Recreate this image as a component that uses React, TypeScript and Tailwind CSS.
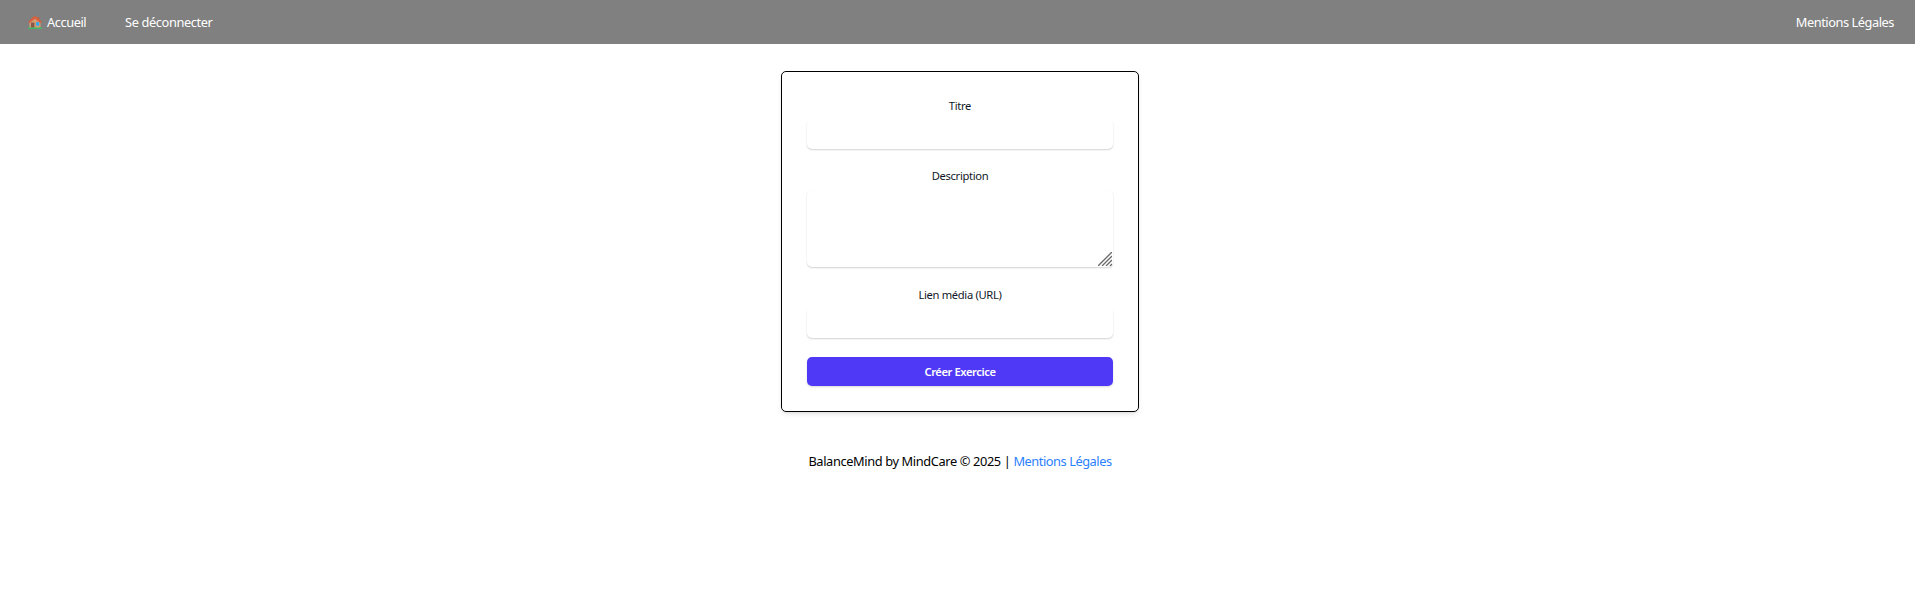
import type { ReactNode } from "react";

function HouseIcon() {
  return (
    <svg width="14" height="13" viewBox="0 0 14 13" aria-hidden="true" className="mb-[2px] shrink-0">
      <rect x="9.6" y="1" width="1.8" height="4" fill="#a8654d" />
      <path d="M1.5 6 7 1.8 12.5 6v6h-11z" fill="#d59b73" />
      <path d="M.3 5.8 5.5.5h3l5.2 5.3-1 1.4L7 2.8 1.3 7.2z" fill="#d9603f" />
      <rect x="3" y="6.6" width="3.4" height="5.2" fill="#85594a" />
      <rect x="8" y="6.2" width="3.2" height="3.4" fill="#2ea8ee" />
      <rect x="0" y="11.6" width="14" height="1.3" rx=".5" fill="#3fb966" />
    </svg>
  );
}

function ResizeGrip() {
  return (
    <svg
      width="14"
      height="14"
      viewBox="0 0 14 14"
      stroke="#6b6b6b"
      strokeWidth="1.4"
      aria-hidden="true"
      className="pointer-events-none absolute right-[1px] bottom-[1px]"
    >
      <path d="M0 14 14 0M4 14 14 4M8 14l6-6M12 14l2-2" />
    </svg>
  );
}

function Field({ label, id, children }: { label: string; id: string; children: ReactNode }) {
  return (
    <div className="flex flex-col">
      <label
        htmlFor={id}
        className="mb-[6px] h-4 text-center text-[11.2px] leading-4 tracking-[-0.32px] text-[#101828]"
      >
        {label}
      </label>
      {children}
    </div>
  );
}

const inputClass =
  "block w-full rounded-[5px] bg-white px-2.5 text-[11.2px] shadow-[0_1px_2px_rgba(0,0,0,0.14),0_1px_2px_-1px_rgba(0,0,0,0.14)] outline-none";

export default function App() {
  return (
    <div className="min-h-screen bg-white font-['Noto_Sans','Open_Sans',sans-serif] text-black">
      <nav className="flex h-11 items-center justify-between bg-[#808080] pt-[2px] pr-[21px] pl-7 text-[12.8px] text-white">
        <div className="flex items-center">
          <a href="#" className="flex w-[97px] items-center gap-[5px]">
            <HouseIcon />
            <span className="whitespace-nowrap tracking-[-0.42px]">Accueil</span>
          </a>
          <a href="#" className="whitespace-nowrap tracking-[-0.38px]">Se déconnecter</a>
        </div>
        <a href="#" className="whitespace-nowrap tracking-[-0.45px]">Mentions Légales</a>
      </nav>

      <main className="flex flex-col items-center pt-[27px] pl-[5px]">
        <form className="h-[341px] w-[358px] rounded-[5px] border border-black px-[25px] pt-[26px] shadow-[0_3px_5px_-1px_rgba(0,0,0,0.1),0_2px_3px_-2px_rgba(0,0,0,0.1)]">
          <Field label="Titre" id="title">
            <input id="title" className={`${inputClass} h-[29px]`} />
          </Field>
          <div className="mt-[19px]">
            <Field label="Description" id="description">
              <div className="relative">
                <textarea id="description" className={`${inputClass} h-[77px] resize-none`} />
                <ResizeGrip />
              </div>
            </Field>
          </div>
          <div className="mt-[20px]">
            <Field label="Lien média (URL)" id="media">
              <input id="media" className={`${inputClass} h-[29px]`} />
            </Field>
          </div>
          <button
            type="button"
            className="mt-[19px] block h-[29px] w-full rounded-[5px] bg-[#4f39f6] pt-[2px] text-[11.2px] font-semibold tracking-[-0.42px] text-white shadow-[0_1px_2px_rgba(0,0,0,0.15)]"
          >
            Créer Exercice
          </button>
        </form>
        <footer className="mt-[39px] text-[12.8px] leading-5 tracking-[-0.37px] whitespace-nowrap">
          BalanceMind by MindCare © 2025 |{" "}
          <a href="#" className="tracking-[-0.45px] text-[#2b7fff]">Mentions Légales</a>
        </footer>
      </main>
    </div>
  );
}
